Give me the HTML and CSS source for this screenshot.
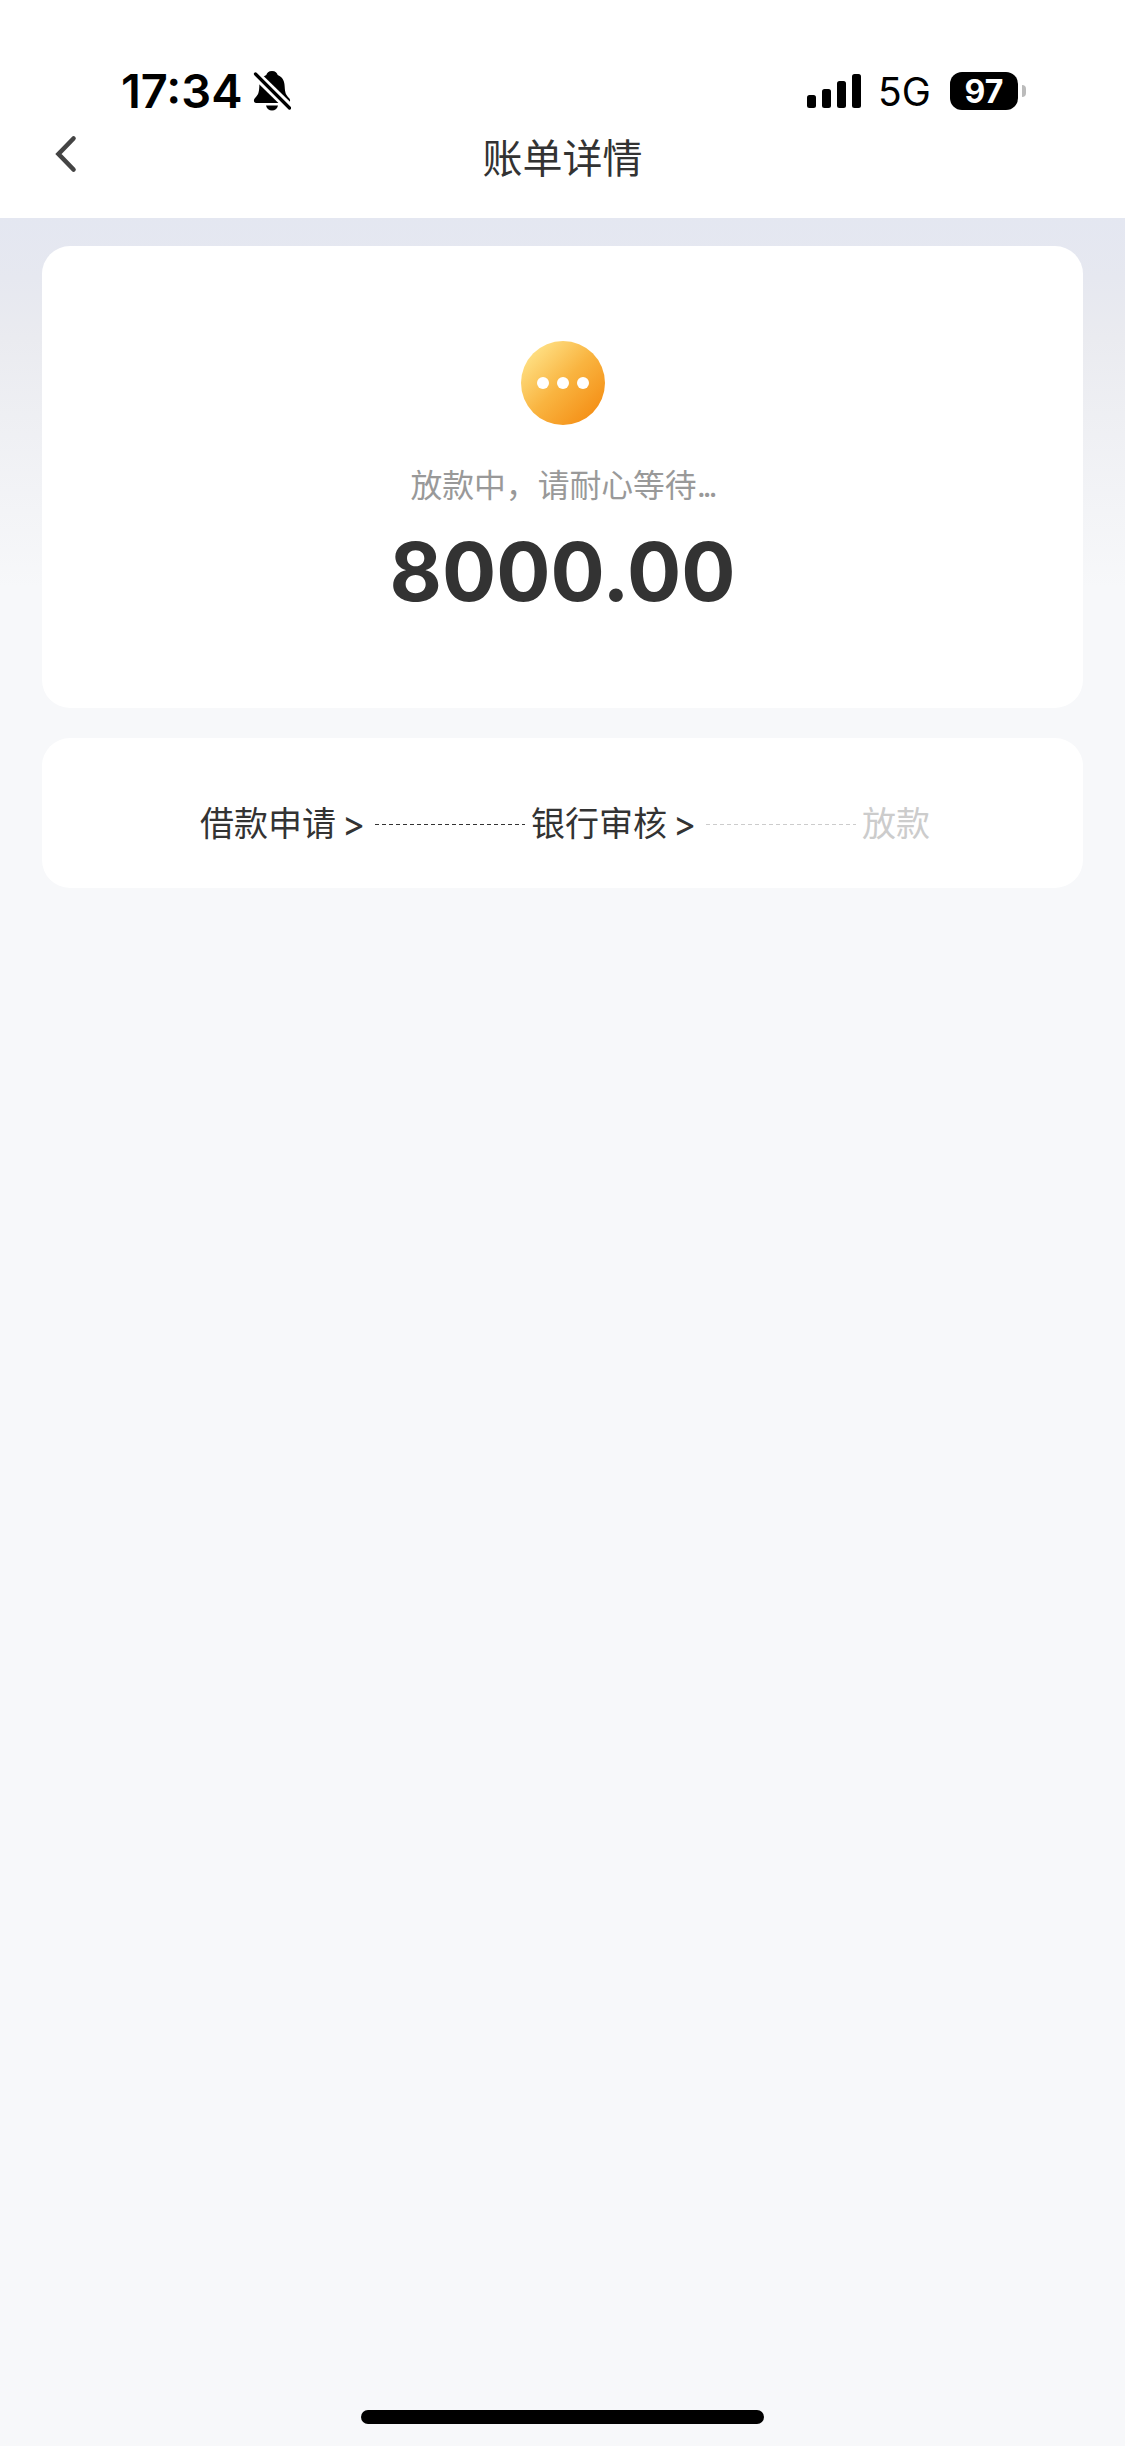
FILE: index.html
```html
<!DOCTYPE html>
<html lang="zh-CN">
<head>
    <meta charset="UTF-8">
    <title>账单详情</title>
    <link rel="stylesheet" href="styles.css">
</head>
<body>
    <header>
        <div class="status-bar">
            <span class="time">17:34</span>
            <svg class="bell" width="38" height="42" viewBox="0 0 38 42">
                <path d="M19 1c-3.500 0-5 2-5.700 4C8 7.500 6.500 11 6.300 17 6 23 5 25 2 28c-2 2-1 5 1 5h32c2 0 3-3 1-5-3-3-4-5-4.300-11C31.500 11 30 7.500 24.700 5 24 3 22.500 1 19 1z"/>
                <path d="M13 35.500h12c-.8 3.200-3 5-6 5s-5.200-1.800-6-5z"/>
                <path d="M2 4l35 34" stroke="#fff" stroke-width="9"/>
                <path d="M2.500 4l34 34" stroke="#000" stroke-width="3.200" stroke-linecap="round"/>
            </svg>
            <svg class="signal" width="54" height="34" viewBox="0 0 54 34">
                <rect x="0" y="21" width="9" height="13" rx="2.500"/>
                <rect x="15" y="15" width="9" height="19" rx="2.500"/>
                <rect x="30" y="7" width="9" height="27" rx="2.500"/>
                <rect x="45" y="0" width="9" height="34" rx="2.500"/>
            </svg>
            <span class="network">5G</span>
            <div class="battery">97</div>
            <div class="battery-tip"></div>
        </div>
        <div class="nav-bar">
            <svg class="back" width="24" height="38" viewBox="0 0 24 38">
                <path d="M20.500 3.500L5.500 19l15 15.500" fill="none" stroke="#444" stroke-width="4.600" stroke-linecap="round"/>
            </svg>
            <h1>账单详情</h1>
        </div>
    </header>

    <main>
        <div class="card result">
            <div class="waiting"><i></i><i></i><i></i></div>
            <p class="tip">放款中，请耐心等待<span>...</span></p>
            <p class="amount">8000.00</p>
        </div>

        <div class="card steps">
            <span>借款申请</span><b>&gt;</b>
            <div class="line"></div>
            <span>银行审核</span><b>&gt;</b>
            <div class="line todo"></div>
            <span class="todo">放款</span>
        </div>
    </main>

    <footer>
        <div class="home-bar"></div>
    </footer>
</body>
</html>
```
FILE: styles.css
```css
* { box-sizing: border-box; margin: 0; padding: 0; }
body {
    min-height: 2446px;
    display: flex;
    flex-direction: column;
    background: #f7f8fa;
    color: #333;
    font-family: Inter, "Noto Sans CJK SC", sans-serif;
}

header { height: 218px; background: #fff; }
.status-bar {
    height: 122px;
    padding: 60px 99px 0 121px;
    display: flex;
    align-items: center;
    color: #000;
}
.time { width: 132px; font-size: 47px; font-weight: 600; line-height: 62px; white-space: nowrap; }
.signal { margin-left: auto; }
.network { width: 70px; margin-left: 17px; padding-top: 2px; font-size: 39px; line-height: 46px; }
.battery {
    width: 68px;
    height: 38px;
    margin-left: 2px;
    border-radius: 12px;
    background: #000;
    color: #fff;
    font-size: 32px;
    font-weight: 700;
    line-height: 39px;
    text-align: center;
}
.battery-tip { width: 4px; height: 12px; margin-left: 4px; border-radius: 0 6px 6px 0; background: #bbb; }

.nav-bar { height: 70px; display: grid; grid-template-columns: 84px 1fr 84px; align-items: center; }
.back { margin: -6px 0 0 53px; }
h1 { padding-top: 3px; font-size: 40px; font-weight: 400; line-height: 60px; text-align: center; }

main {
    flex: 1;
    padding: 28px 42px;
    background: linear-gradient(#e4e7f1, #e6e8f0 60px, #eaebf0 120px, #f7f8fa 370px);
}
.card { border-radius: 28px; background: #fff; }
.result { height: 462px; padding-top: 95px; display: flex; flex-direction: column; align-items: center; }
.waiting {
    width: 84px;
    height: 84px;
    display: flex;
    align-items: center;
    justify-content: center;
    gap: 8px;
    border-radius: 50%;
    background: linear-gradient(135deg, #ffe58c 8%, #f9b440 50%, #f48c12 92%);
}
.waiting i { width: 12px; height: 12px; border-radius: 50%; background: #fff; }
.tip { margin-top: 37px; color: #999; font-size: 31.800px; line-height: 48px; }
.tip span { letter-spacing: -3.200px; }
.amount { margin-top: 12px; font-size: 80.500px; font-weight: 700; line-height: 100px; }

.steps {
    height: 150px;
    margin-top: 30px;
    padding: 36px 0 0 158px;
    display: flex;
    align-items: flex-start;
    font-size: 34px;
    line-height: 100px;
}
.steps b { width: 21px; margin-left: 6px; font-size: 35px; font-weight: 400; line-height: 98px; }
.line { width: 150px; height: 1px; margin: 50px 6px 0 12px; background: repeating-linear-gradient(90deg, #333 0 4px, transparent 4px 7px); }
.line.todo { background: repeating-linear-gradient(90deg, #ccc 0 4px, transparent 4px 7px); }
span.todo { color: #ccc; }

footer { height: 36px; display: flex; justify-content: center; }
.home-bar { width: 403px; height: 14px; border-radius: 7px; background: #000; }
```
